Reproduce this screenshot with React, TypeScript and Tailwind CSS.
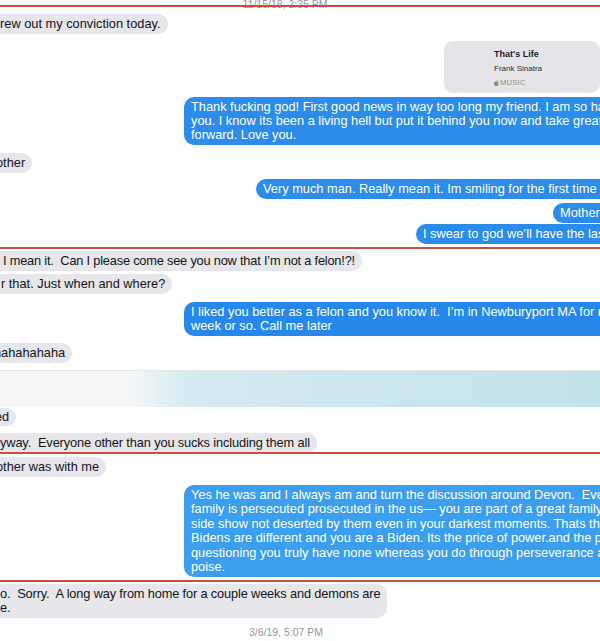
import React from "react";

function AppleGlyph() {
  return (
    <svg width="5" height="6" viewBox="0 0 10 12" className="inline-block mr-[1px] -mt-[1px] align-middle">
      <path d="M8.2 6.4c0-1.5 1.2-2.2 1.3-2.3-.7-1-1.8-1.2-2.2-1.2-.9-.1-1.8.6-2.3.6-.5 0-1.2-.5-2-.5C1.9 3 .9 3.6.4 4.6c-1 1.8-.3 4.4.7 5.8.5.7 1 1.5 1.8 1.4.7 0 1-.5 1.9-.5s1.1.5 1.9.5 1.3-.7 1.7-1.4c.6-.8.8-1.5.8-1.6 0 0-1.6-.6-1.6-2.4zM6.8 2c.4-.5.7-1.2.6-1.9-.6 0-1.3.4-1.7.9-.4.4-.7 1.1-.6 1.8.7.1 1.3-.3 1.7-.8z" fill="#8a8a8e" />
    </svg>
  );
}

export default function App() {
  return (
    <div className="relative w-[600px] h-[641px] overflow-hidden bg-white font-['Liberation_Sans',Arial,sans-serif] text-[12.8px] leading-[14px] text-[#141414]">
      <div className="flex flex-col">
        {/* top timestamp */}
        <div className="-mt-[2px] h-[12px] pr-[30px] text-center text-[10.5px] leading-[12px] text-[#96969b]">
          11/15/18, 2:35 PM
        </div>

        {/* rew out my conviction */}
        <div className="mt-[4px] flex">
          <div className="-ml-[12px] pl-[12px] pr-[7px] py-[3px] rounded-[10px] bg-[#e6e6eb] whitespace-nowrap">
            rew out my conviction today.
          </div>
        </div>

        {/* music card */}
        <div className="mt-[7px] flex">
          <div className="ml-[444px] w-[200px] h-[52px] rounded-[9px] bg-[#e5e5e9] pl-[50px] pt-[7px] flex flex-col">
            <div className="text-[9px] leading-[12px] font-semibold text-[#1c1c1e]">That's Life</div>
            <div className="mt-[3px] text-[8px] leading-[11px] text-[#2a2a2c]">Frank Sinatra</div>
            <div className="mt-[4px] text-[7.5px] leading-[10px] tracking-[0.3px] text-[#8a8a8e]">
              <AppleGlyph />MUSIC
            </div>
          </div>
        </div>

        {/* blue 1 */}
        <div className="mt-[4px] flex">
          <div className="ml-[184px] w-[480px] shrink-0 rounded-[10px] bg-[#2b8cea] text-white px-[7px] py-[3px] whitespace-nowrap">
            <div>Thank fucking god! First good news in way too long my friend. I am so happy for</div>
            <div>you. I know its been a living hell but put it behind you now and take great strides</div>
            <div>forward. Love you.</div>
          </div>
        </div>

        {/* other */}
        <div className="mt-[8px] flex">
          <div className="-ml-[16px] pl-[12px] pr-[7px] py-[3px] rounded-[10px] bg-[#e6e6eb] whitespace-nowrap">
            other
          </div>
        </div>

        {/* very much man */}
        <div className="mt-[6px] flex">
          <div className="ml-[256px] w-[420px] shrink-0 rounded-[10px] bg-[#2b8cea] text-white px-[7px] py-[3px] whitespace-nowrap">
            Very much man. Really mean it. Im smiling for the first time in weeks
          </div>
        </div>

        {/* Mother */}
        <div className="mt-[4px] flex">
          <div className="ml-[553px] w-[120px] shrink-0 rounded-[10px] bg-[#2b8cea] text-white px-[7px] py-[3px] whitespace-nowrap">
            Mother
          </div>
        </div>

        {/* I swear */}
        <div className="mt-[1px] flex">
          <div className="ml-[416px] w-[260px] shrink-0 rounded-[10px] bg-[#2b8cea] text-white px-[7px] py-[3px] whitespace-nowrap">
            I swear to god we’ll have the last laugh
          </div>
        </div>

        {/* I mean it */}
        <div className="mt-[7px] flex">
          <div className="-ml-[9px] pl-[12px] pr-[7px] py-[3px] rounded-[10px] bg-[#e6e6eb] whitespace-nowrap tracking-[-0.2px]">
            I mean it.&nbsp; Can I please come see you now that I’m not a felon!?!
          </div>
        </div>

        {/* r that */}
        <div className="mt-[3px] flex">
          <div className="-ml-[11px] pl-[12px] pr-[7px] py-[3px] rounded-[10px] bg-[#e6e6eb] whitespace-nowrap">
            r that. Just when and where?
          </div>
        </div>

        {/* I liked */}
        <div className="mt-[8px] flex">
          <div className="ml-[184px] w-[480px] shrink-0 rounded-[10px] bg-[#2688ea] text-white px-[7px] py-[3px] whitespace-nowrap">
            <div>I liked you better as a felon and you know it.&nbsp; I’m in Newburyport MA for next</div>
            <div>week or so. Call me later</div>
          </div>
        </div>

        {/* hahaha */}
        <div className="mt-[7px] flex">
          <div className="-ml-[18px] pl-[12px] pr-[7px] py-[3px] rounded-[10px] bg-[#e6e6eb] whitespace-nowrap">
            hahahahaha
          </div>
        </div>

        {/* blurred band */}
        <div className="mt-[7px] h-[37px] border-t border-[#e4e7e8] bg-linear-to-r from-[#f5f6f7] from-[22%] via-[#d3eaf0] via-[32%] to-[#c2e2ea]" />

        {/* ed */}
        <div className="mt-[1px] flex">
          <div className="-ml-[17px] pl-[12px] pr-[7px] py-[2px] rounded-[10px] bg-[#e6e6eb] whitespace-nowrap">
            ed
          </div>
        </div>

        {/* yway */}
        <div className="mt-[7px] flex">
          <div className="-ml-[12px] pl-[12px] pr-[7px] py-[3px] rounded-[10px] bg-[#e6e6eb] whitespace-nowrap tracking-[-0.13px]">
            yway.&nbsp; Everyone other than you sucks including them all
          </div>
        </div>

        {/* other was with me */}
        <div className="mt-[4px] flex">
          <div className="-ml-[16px] pl-[12px] pr-[7px] py-[3px] rounded-[10px] bg-[#e6e6eb] whitespace-nowrap">
            other was with me
          </div>
        </div>

        {/* big blue */}
        <div className="mt-[8px] flex">
          <div className="ml-[184px] w-[480px] shrink-0 rounded-[10px] bg-[#3c9eee] text-white px-[7px] py-[3px] leading-[14.4px] whitespace-nowrap">
            <div>Yes he was and I always am and turn the discussion around Devon.&nbsp; Everyone</div>
            <div>family is persecuted prosecuted in the us— you are part of a great family—</div>
            <div>side show not deserted by them even in your darkest moments. Thats the</div>
            <div>Bidens are different and you are a Biden. Its the price of power.and the people</div>
            <div>questioning you truly have none whereas you do through perseverance and</div>
            <div>poise.</div>
          </div>
        </div>

        {/* o. Sorry */}
        <div className="mt-[7px] flex">
          <div className="-ml-[12px] pl-[12px] pr-[7px] py-[3px] rounded-[10px] bg-[#e6e6eb] whitespace-nowrap tracking-[-0.15px]">
            <div>o.&nbsp; Sorry.&nbsp; A long way from home for a couple weeks and demons are</div>
            <div>e.</div>
          </div>
        </div>

        {/* bottom timestamp */}
        <div className="mt-[8px] h-[12px] pr-[28px] text-center text-[10.5px] leading-[12px] text-[#96969b]">
          3/6/19, 5:07 PM
        </div>
      </div>

      {/* red annotation lines over the screenshot */}
      <div className="absolute left-0 right-0 top-[5px] h-[2px] bg-[#c4503f]" />
      <div className="absolute left-0 right-0 top-[247px] h-[2px] bg-[#c4503f]" />
      <div className="absolute left-0 right-0 top-[452px] h-[2px] bg-[#c4503f]" />
      <div className="absolute left-0 right-0 top-[580px] h-[2px] bg-[#c4503f]" />
    </div>
  );
}
